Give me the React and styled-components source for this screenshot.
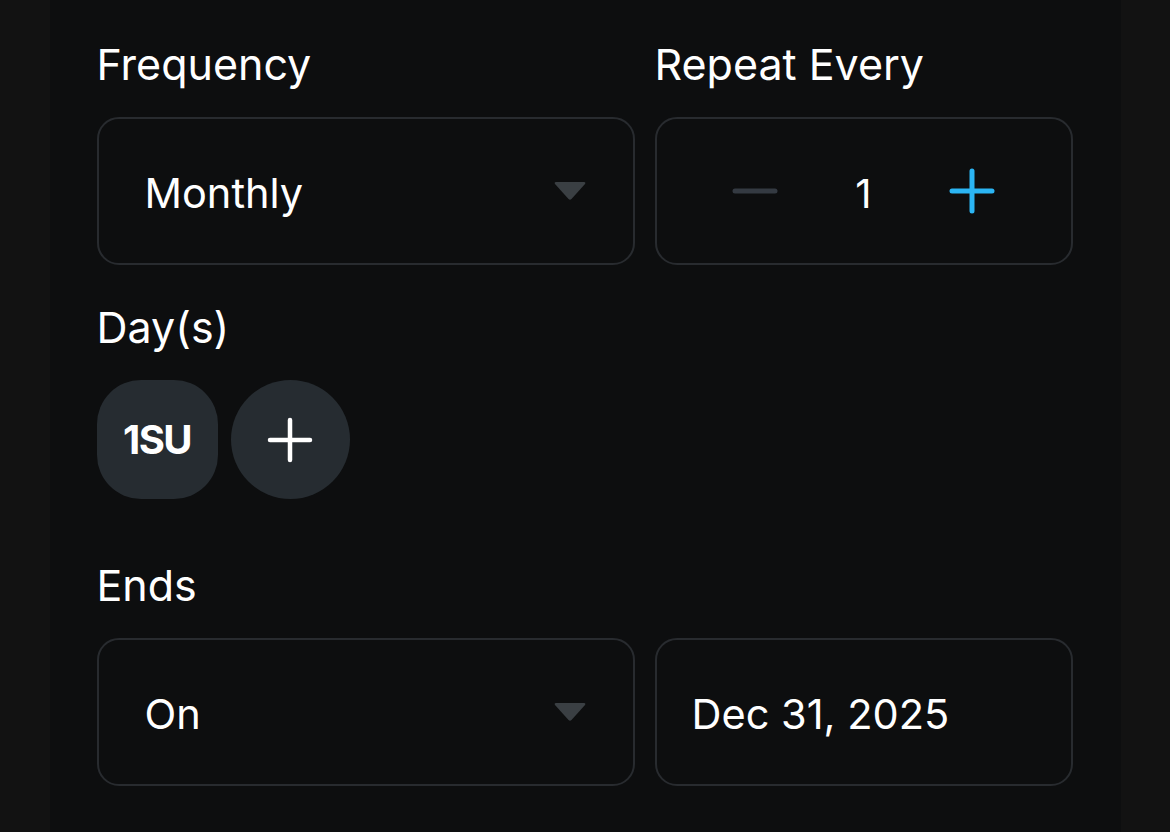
import styled, { createGlobalStyle } from 'styled-components'

const GlobalStyle = createGlobalStyle`
  html, body {
    margin: 0;
    padding: 0;
    background: #121212;
  }
  body {
    font-family: Inter, 'Liberation Sans', sans-serif;
    color: #ffffff;
  }
`

const Page = styled.div`
  width: 1170px;
  height: 832px;
  display: flex;
  justify-content: center;
  background: #121212;
  overflow: hidden;
`

const Panel = styled.div`
  width: 1071px;
  background: #0d0e0f;
  padding: 40px 47px 0;
  box-sizing: border-box;
  display: flex;
  flex-direction: column;
`

const Section = styled.div`
  display: flex;
  flex-direction: column;
  margin-bottom: ${(p) => p.$gap || 0}px;
`

const Label = styled.div`
  font-size: 43px;
  line-height: 48px;
  font-weight: 400;
  color: #ffffff;
  margin-bottom: 29px;
`

const Row = styled.div`
  display: grid;
  grid-template-columns: 538px 418px;
  gap: 20px;
`

const Field = styled.div`
  height: 148px;
  box-sizing: border-box;
  border: 2.5px solid #282b2f;
  border-radius: 22px;
  display: flex;
  align-items: center;
  padding: 0 46px 0 ${(p) => p.$padLeft || 46}px;
  font-size: 41.5px;
  color: #ffffff;
`

const Value = styled.span`
  flex: 1;
  padding-top: 3px;
`

const Stepper = styled(Field)`
  justify-content: center;
  padding: 0;
`

const StepButton = styled.div`
  width: 80px;
  height: 60px;
  display: flex;
  align-items: center;
  justify-content: center;
`

const StepValue = styled.span`
  width: 137px;
  text-align: center;
  font-size: 40px;
  padding-top: 4px;
`

const Chips = styled.div`
  display: flex;
  gap: 13px;
`

const Chip = styled.div`
  width: ${(p) => (p.$round ? 119 : 121)}px;
  height: 119px;
  border-radius: ${(p) => (p.$round ? '50%' : '44px')};
  background: #262c31;
  display: flex;
  align-items: center;
  justify-content: center;
  font-size: 40px;
  font-weight: 700;
  letter-spacing: -1.5px;
  color: #ffffff;
`

const Caret = () => (
  <svg width="34" height="22" viewBox="0 0 34 22">
    <path d="M3 2 H31 Q33 2 32 4 L18.5 19 Q17 20.5 15.5 19 L2 4 Q1 2 3 2 Z" fill="#3a3f43" />
  </svg>
)

const Minus = () => (
  <svg width="46" height="8" viewBox="0 0 46 8">
    <line x1="3" y1="4" x2="43" y2="4" stroke="#343a42" strokeWidth="5" strokeLinecap="round" />
  </svg>
)

const Plus = ({ color = '#2bb5f4', size = 46, width = 5 }) => (
  <svg width={size} height={size} viewBox={`0 0 ${size} ${size}`}>
    <line x1={size / 2} y1="3" x2={size / 2} y2={size - 3} stroke={color} strokeWidth={width} strokeLinecap="round" />
    <line x1="3" y1={size / 2} x2={size - 3} y2={size / 2} stroke={color} strokeWidth={width} strokeLinecap="round" />
  </svg>
)

export default function App() {
  return (
    <Page>
      <GlobalStyle />
      <Panel>
        <Section $gap={38}>
          <Row>
            <div>
              <Label>Frequency</Label>
              <Field>
                <Value>Monthly</Value>
                <Caret />
              </Field>
            </div>
            <div>
              <Label>Repeat Every</Label>
              <Stepper>
                <StepButton>
                  <Minus />
                </StepButton>
                <StepValue>1</StepValue>
                <StepButton>
                  <Plus />
                </StepButton>
              </Stepper>
            </div>
          </Row>
        </Section>

        <Section $gap={62}>
          <Label>Day(s)</Label>
          <Chips>
            <Chip>1SU</Chip>
            <Chip $round>
              <Plus color="#ffffff" size={46} width={4.5} />
            </Chip>
          </Chips>
        </Section>

        <Section>
          <Label>Ends</Label>
          <Row>
            <Field>
              <Value>On</Value>
              <Caret />
            </Field>
            <Field $padLeft={35}>
              <Value>Dec 31, 2025</Value>
            </Field>
          </Row>
        </Section>
      </Panel>
    </Page>
  )
}
